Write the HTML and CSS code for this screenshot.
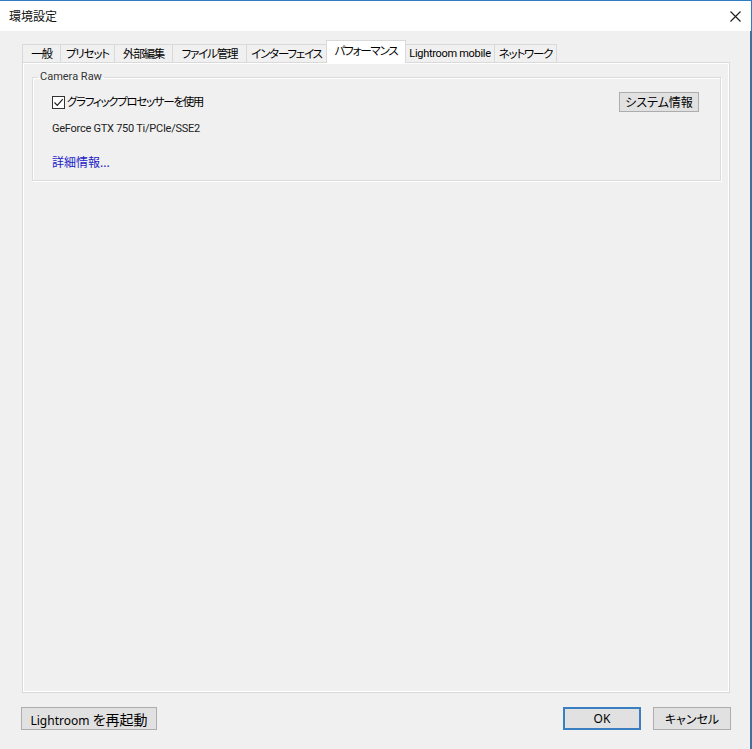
FILE: index.html
```html
<!DOCTYPE html>
<html lang="ja">
<head>
    <meta charset="UTF-8">
    <meta name="viewport" content="width=device-width, initial-scale=1.0">
    <title>環境設定</title>
    <link rel="stylesheet" href="styles.css">
</head>
<body>
    <div class="window">
        <div class="titlebar">
            <span class="title">環境設定</span>
            <svg class="close" width="11" height="11" viewBox="0 0 11 11">
                <path d="M0.5 0.5 L10.5 10.5 M10.5 0.5 L0.5 10.5" stroke="#1a1a1a" stroke-width="1.1" fill="none"/>
            </svg>
        </div>
        <div class="content">
            <div class="tabs">
                <div class="tab general">一般</div>
                <div class="tab presets">プリセット</div>
                <div class="tab external">外部編集</div>
                <div class="tab files">ファイル管理</div>
                <div class="tab interface">インターフェイス</div>
                <div class="tab perf active">パフォーマンス</div>
                <div class="tab mobile latin">Lightroom mobile</div>
                <div class="tab network">ネットワーク</div>
            </div>
            <div class="panel">
                <fieldset class="group">
                    <legend>Camera Raw</legend>
                    <div class="row">
                        <label class="check">
                            <span class="box">
                                <svg width="11" height="11" viewBox="0 0 11 11">
                                    <path d="M1.5 5.5 L4.3 8.3 L9.8 2.2" stroke="#222" stroke-width="1.2" fill="none"/>
                                </svg>
                            </span>
                            <span class="check-text">グラフィックプロセッサーを使用</span>
                        </label>
                        <button class="btn sysinfo">システム情報</button>
                    </div>
                    <p class="gpu">GeForce GTX 750 Ti/PCIe/SSE2</p>
                    <a class="more" href="#">詳細情報...</a>
                </fieldset>
            </div>
            <div class="footer">
                <button class="btn restart">Lightroom <span class="jp">を再起動</span></button>
                <div class="spacer"></div>
                <button class="btn ok">OK</button>
                <button class="btn cancel">キャンセル</button>
            </div>
        </div>
    </div>
</body>
</html>
```

FILE: styles.css
```css
body, html {
    margin: 0;
    padding: 0;
    height: 100%;
    background: #f0f0f0;
    font-family: 'Noto Sans', 'Noto Sans CJK JP', sans-serif;
    font-size: 12px;
    color: #000;
}
.window {
    width: 752px;
    height: 749px;
    display: flex;
    flex-direction: column;
    box-sizing: border-box;
}
.titlebar {
    height: 31px;
    flex: none;
    box-sizing: border-box;
    background: #fff;
    border-top: 1px solid #2f7bc4;
    border-right: 1px solid #2f7bc4;
    display: flex;
    align-items: center;
    justify-content: space-between;
    padding: 0 10px 0 9px;
}
.title {
    font-size: 12px;
    color: #111;
}
.content {
    flex: 1;
    display: flex;
    flex-direction: column;
    padding: 9px 20px 0 22px;
    border-right: 2px solid #3f6f9c;
    font-feature-settings: "palt";
}

/* tabs */
.tabs {
    display: flex;
    align-items: flex-end;
    height: 23px;
    margin-bottom: -1px;
    padding-left: 1px;
}
.tab {
    height: 19px;
    box-sizing: border-box;
    margin-left: -1px;
    border: 1px solid #d9d9d9;
    border-bottom: none;
    background: #f0f0f0;
    display: flex;
    align-items: center;
    justify-content: center;
    white-space: nowrap;
    line-height: 16px;
    font-size: 11.5px;
    letter-spacing: -1.2px;
    flex: none;
}
.tab.latin {
    font-family: Roboto, 'Noto Sans CJK JP', sans-serif;
    font-size: 11px;
    letter-spacing: -0.3px;
}
.tab.active {
    height: 23px;
    background: #fff;
    position: relative;
    padding-bottom: 3px;
}
.general { width: 39px; }
.presets { width: 55px; }
.external { width: 59px; }
.files { width: 75px; }
.interface { width: 81px; }
.perf { width: 80px; }
.mobile { width: 90px; }
.network { width: 63px; }

/* page */
.panel {
    flex: 1;
    border: 1px solid #d9d9d9;
    box-shadow: inset 0 0 0 1px #fff;
    background: #f0f0f0;
    padding: 6px 8px 0 9px;
}
.group {
    margin: 0;
    border: 1px solid #dcdcdc;
    box-shadow: inset 1px 1px 0 #fff, 1px 1px 0 #fff;
    padding: 7px 21px 9px 19px;
}
.group legend {
    padding: 0 2px;
    margin-left: -14px;
    color: #333;
    line-height: 16px;
    font-family: Roboto, 'Noto Sans CJK JP', sans-serif;
    font-size: 11px;
}
.row {
    display: flex;
    align-items: center;
    justify-content: space-between;
    height: 20px;
}
.check {
    display: flex;
    align-items: center;
    gap: 2px;
    line-height: 16px;
}
.check-text {
    font-size: 11.5px;
    letter-spacing: -1.3px;
}
.box {
    width: 13px;
    height: 13px;
    box-sizing: border-box;
    border: 1px solid #333;
    background: #fff;
    display: flex;
    align-items: center;
    justify-content: center;
}
.btn {
    font-family: inherit;
    font-size: 12px;
    font-feature-settings: "palt";
    background: #e1e1e1;
    border: 1px solid #adadad;
    color: #000;
    padding: 0;
    box-sizing: border-box;
}
.sysinfo {
    width: 80px;
    height: 20px;
}
.gpu {
    margin: 9px 0 0;
    line-height: 16px;
    color: #222;
    font-family: Roboto, 'Noto Sans CJK JP', sans-serif;
    font-size: 11px;
    letter-spacing: -0.25px;
}
.more {
    display: block;
    margin-top: 18px;
    line-height: 16px;
    color: #1c1cc8;
    text-decoration: none;
}

/* bottom buttons */
.footer {
    display: flex;
    align-items: center;
    gap: 12px;
    height: 23px;
    padding: 14px 0 19px;
    margin-left: -1px;
    margin-right: -1px;
}
.spacer {
    flex: 1;
}
.footer .btn {
    height: 23px;
}
.restart {
    width: 136px;
}
.restart .jp {
    font-size: 14px;
}
.ok {
    width: 78px;
    border: 2px solid #3a7fc1;
}
.cancel {
    width: 78px;
}
```
